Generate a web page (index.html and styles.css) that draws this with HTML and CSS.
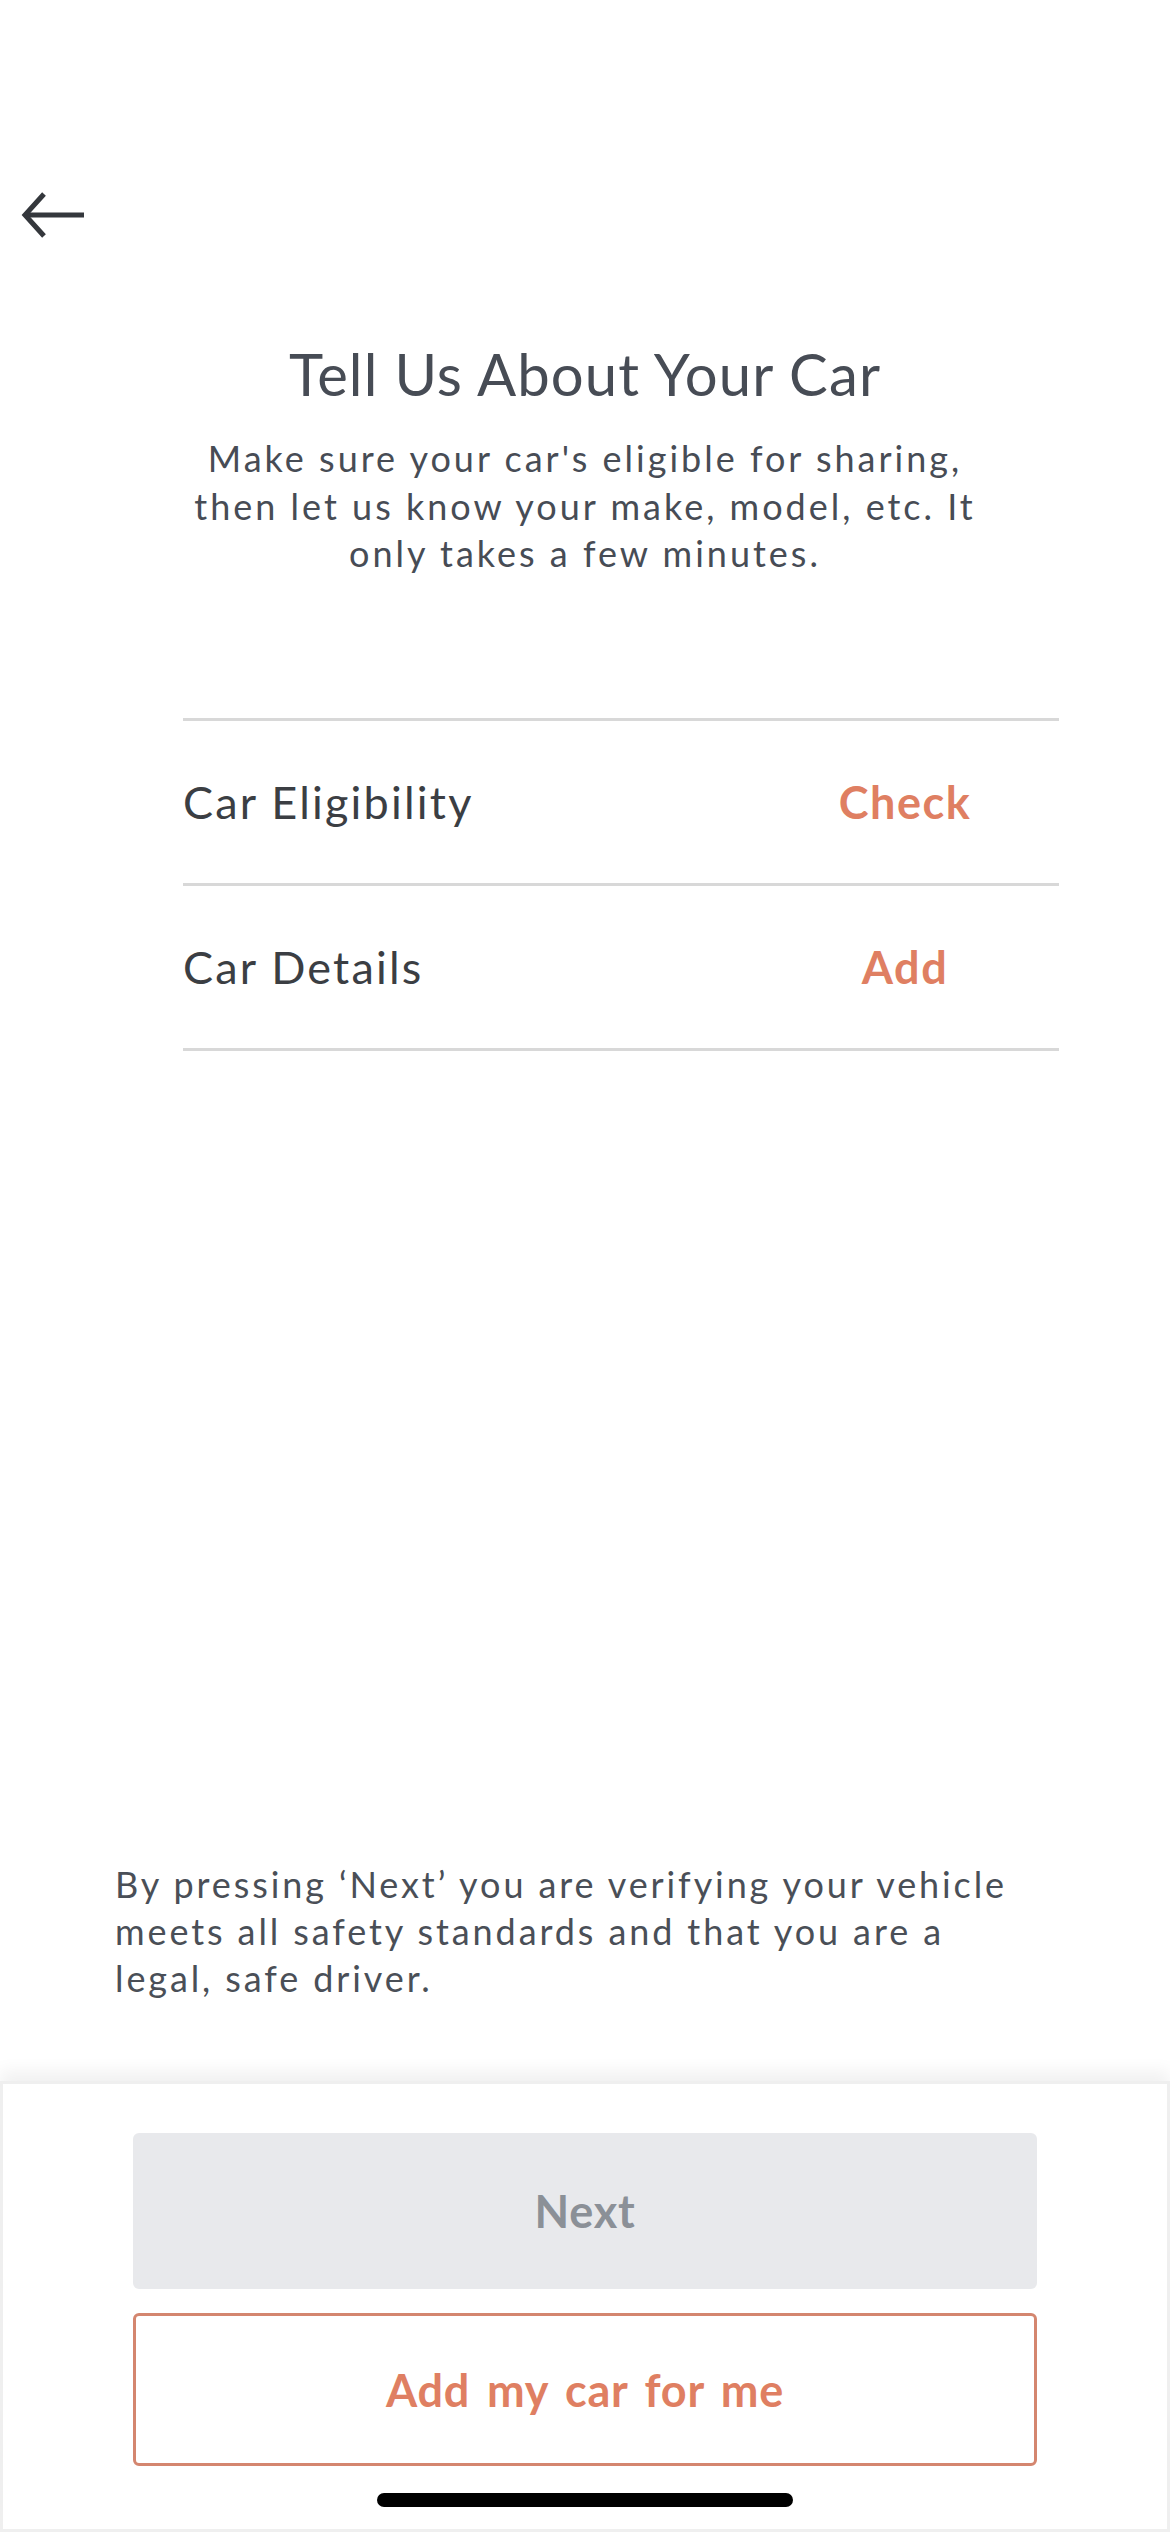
FILE: index.html
```html
<!DOCTYPE html>
<html lang="en">
<head>
<meta charset="utf-8">
<title>Tell Us About Your Car</title>
<link rel="stylesheet" href="styles.css">
</head>
<body>
<div class="screen">
  <header class="top">
    <button class="back" aria-label="Back">
      <svg width="64" height="50" viewBox="0 0 64 50">
        <path d="M23 3 L4 24 L23 45" fill="none" stroke="#34373c" stroke-width="5" stroke-linejoin="miter"/>
        <path d="M5 24 H63" fill="none" stroke="#34373c" stroke-width="5"/>
      </svg>
    </button>
  </header>

  <section class="intro">
    <h1 class="title">Tell Us About Your Car</h1>
    <p class="subtitle">Make sure your car's eligible for sharing, then let us know your make, model, etc. It only takes a few minutes.</p>
  </section>

  <ul class="steps">
    <li class="step"><span class="step-label">Car Eligibility</span><span class="step-action">Check</span></li>
    <li class="step"><span class="step-label">Car Details</span><span class="step-action">Add</span></li>
  </ul>

  <div class="spacer"></div>

  <p class="disclaimer">By pressing ‘Next’ you are verifying your vehicle meets all safety standards and that you are a legal, safe driver.</p>

  <footer class="panel">
    <button class="btn btn-disabled">Next</button>
    <button class="btn btn-outline">Add my car for me</button>
    <div class="home-indicator"></div>
  </footer>
</div>
</body>
</html>
```

FILE: styles.css
```css
* { box-sizing: border-box; }
html, body { margin: 0; padding: 0; background: #ffffff; }
body { font-family: "Lato", "Noto Sans", sans-serif; color: #474c55; }

.screen {
  width: 1170px;
  height: 2532px;
  display: flex;
  flex-direction: column;
  overflow: hidden;
}

.top {
  padding: 191px 0 0 21px;
  height: 339px;
}
.back {
  border: 0;
  background: none;
  padding: 0;
  display: block;
}
.back svg { display: block; }

.intro {
  text-align: center;
}
.title {
  margin: 0;
  font-size: 58px;
  font-weight: 400;
  line-height: 70px;
  letter-spacing: 1.1px;
  color: #474c55;
}
.subtitle {
  margin: 26px auto 0;
  width: 820px;
  font-size: 36px;
  line-height: 47.5px;
  letter-spacing: 3px;
  color: #474c55;
}

.steps {
  list-style: none;
  margin: 140px 111px 0 183px;
  padding: 0;
  border-bottom: 3px solid #d8d8d8;
}
.step {
  display: flex;
  align-items: center;
  height: 165px;
  border-top: 3px solid #d8d8d8;
}
.step-label {
  flex: 1;
  font-size: 45px;
  color: #3b3e43;
  letter-spacing: 2.2px;
}
.step-action {
  width: 200px;
  margin-right: 54px;
  text-align: center;
  font-size: 45px;
  font-weight: 700;
  letter-spacing: 1.5px;
  color: #df7f62;
}

.spacer { flex: 1; }

.disclaimer {
  margin: 0 140px 79px 115px;
  font-size: 36px;
  line-height: 47px;
  letter-spacing: 2.9px;
  color: #4a4f57;
}

.panel {
  height: 451px;
  border: 3px solid #efefef;
  box-shadow: 0 -10px 16px rgba(0, 0, 0, 0.06);
  padding: 49px 130px 0;
  display: flex;
  flex-direction: column;
  align-items: stretch;
}
.btn {
  font-family: "Lato", "Noto Sans", sans-serif;
  font-size: 45px;
  font-weight: 700;
  letter-spacing: 0.8px;
  word-spacing: 5px;
  border-radius: 6px;
  cursor: pointer;
}
.btn-disabled {
  height: 156px;
  border: 0;
  background: #e8e9ec;
  color: #8b9097;
}
.btn-outline {
  margin-top: 24px;
  height: 153px;
  border: 3px solid #d4866f;
  background: #ffffff;
  color: #df7f62;
}
.home-indicator {
  align-self: center;
  margin-top: 27px;
  width: 416px;
  height: 14px;
  border-radius: 7px;
  background: #000000;
}
```
